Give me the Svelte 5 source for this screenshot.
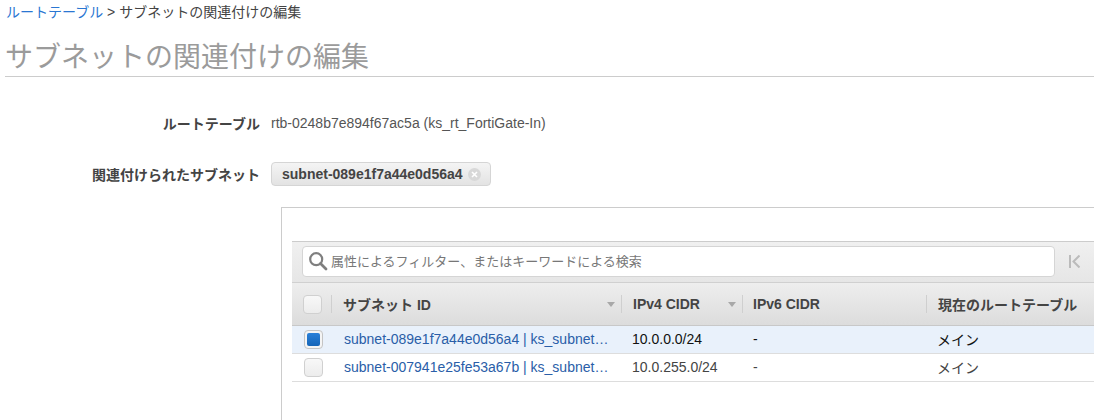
<script>
  const rows = [
    { id: 'subnet-089e1f7a44e0d56a4 | ks_subnet…', cidr: '10.0.0.0/24', selected: true },
    { id: 'subnet-007941e25fe53a67b | ks_subnet…', cidr: '10.0.255.0/24', selected: false }
  ];
</script>

<div class="page">
  <nav class="crumb"><span class="link">ルートテーブル</span> &gt; サブネットの関連付けの編集</nav>
  <h1>サブネットの関連付けの編集</h1>

  <div class="field first">
    <div class="label">ルートテーブル</div>
    <div class="value">rtb-0248b7e894f67ac5a (ks_rt_FortiGate-In)</div>
  </div>
  <div class="field second">
    <div class="label">関連付けられたサブネット</div>
    <div class="chip">
      <span>subnet-089e1f7a44e0d56a4</span>
      <svg width="13" height="13" viewBox="0 0 13 13"><circle cx="6.5" cy="6.5" r="6.5" fill="#d8d8d8"/><path d="M4 4l5 5M9 4l-5 5" stroke="#fff" stroke-width="1.6"/></svg>
    </div>
  </div>

  <section class="panel">
    <div class="toolbar">
      <div class="search">
        <svg width="20" height="20" viewBox="0 0 20 20" fill="none"><circle cx="8.2" cy="8.2" r="6" stroke="#7f7f7f" stroke-width="2.2"/><path d="M12.5 12.5l5.5 5.5" stroke="#7f7f7f" stroke-width="2.8" stroke-linecap="round"/></svg>
        <span>属性によるフィルター、またはキーワードによる検索</span>
      </div>
      <svg class="first-page" width="11" height="13" viewBox="0 0 11 13" fill="none"><path d="M1 0v13" stroke="#bbb" stroke-width="2"/><path d="M10.5 .5L4.5 6.5l6 6" stroke="#bbb" stroke-width="2"/></svg>
    </div>

    <div class="grid head">
      <div class="cell check"><span class="box"></span></div>
      <div class="cell th sep">サブネット ID<i class="caret"></i></div>
      <div class="cell th sep">IPv4 CIDR<i class="caret"></i></div>
      <div class="cell th sep tight">IPv6 CIDR</div>
      <div class="cell th sep">現在のルートテーブル</div>
    </div>
    {#each rows as row}
      <div class="grid row" class:selected={row.selected}>
        <div class="cell check"><span class="box" class:on={row.selected}></span></div>
        <div class="cell td id">{row.id}</div>
        <div class="cell td">{row.cidr}</div>
        <div class="cell td">-</div>
        <div class="cell td">メイン</div>
      </div>
    {/each}
  </section>
</div>

<style>
  :global(body) { margin: 0; background: #fff; overflow: hidden; }
  .page {
    width: 1094px;
    height: 420px;
    overflow: hidden;
    box-sizing: border-box;
    padding: 0 0 0 5px;
    font-family: "Liberation Sans", "Noto Sans CJK JP", sans-serif;
    font-size: 14px;
    color: #444;
  }
  .crumb { height: 24px; line-height: 24px; padding-left: 1px; white-space: nowrap; }
  .link { color: #2a76d2; }
  h1 {
    margin: 15px 0 0;
    height: 37px;
    line-height: 37px;
    font-size: 28px;
    font-weight: 400;
    color: #9b9b9b;
    border-bottom: 1px solid #ccc;
    white-space: nowrap;
  }
  .field { display: flex; align-items: center; }
  .first { margin-top: 32px; height: 27px; }
  .second { margin-top: 26px; height: 24px; }
  .label { width: 255px; text-align: right; font-weight: 700; color: #444; white-space: nowrap; }
  .value { margin-left: 11px; color: #555; white-space: nowrap; }
  .chip {
    margin-left: 11px;
    box-sizing: border-box;
    width: 220px;
    height: 24px;
    display: flex;
    align-items: center;
    gap: 5px;
    padding-left: 10px;
    border: 1px solid #d5d5d5;
    border-radius: 4px;
    background: linear-gradient(#f4f4f4, #e3e3e3);
    font-weight: 700;
    color: #444;
    white-space: nowrap;
  }
  .panel {
    margin: 21px 0 0 276px;
    width: 900px;
    height: 300px;
    box-sizing: border-box;
    border: 1px solid #ccc;
    padding: 33px 10px 0;
  }
  .toolbar {
    width: 810px;
    height: 41px;
    box-sizing: border-box;
    display: flex;
    align-items: center;
    padding: 0 0 2px 10px;
    border-top: 1px solid #ccc;
    background: linear-gradient(#f0f0f0, #e6e6e6);
  }
  .search {
    width: 753px;
    height: 31px;
    box-sizing: border-box;
    display: flex;
    align-items: center;
    gap: 3px;
    padding-left: 5px;
    background: #fff;
    border: 1px solid #d5d5d5;
    border-radius: 4px;
    font-size: 13px;
    color: #777;
    white-space: nowrap;
  }
  .search span { padding-bottom: 1px; }
  .first-page { margin-left: 14px; }
  .grid {
    display: grid;
    grid-template-columns: 39px 290px 121px 184px 176px;
    width: 810px;
  }
  .head {
    height: 44px;
    border-top: 1px solid #d0d0d0;
    border-bottom: 1px solid #c8c8c8;
    box-sizing: border-box;
    background: linear-gradient(#eeeeee, #dcdcdc);
  }
  .row {
    height: 28px;
    box-sizing: border-box;
    border-bottom: 1px solid #ddd;
  }
  .row.selected { background: #e9f1fb; }
  .cell { display: flex; align-items: center; min-width: 0; position: relative; }
  .check { padding-left: 11px; }
  .box {
    width: 19px;
    height: 19px;
    box-sizing: border-box;
    border: 1px solid #d0d0d0;
    border-radius: 4px;
    background: linear-gradient(#f8f8f8, #ececec);
  }
  .row .box { margin-left: 1px; }
  .box.on {
    background: #f4f4f4;
    border-color: #c4c4c4;
    position: relative;
  }
  .box.on::after {
    content: "";
    position: absolute;
    inset: 2px;
    border-radius: 2px;
    background: linear-gradient(#2a80d8, #1565b8);
  }
  .th {
    font-weight: 700;
    color: #444;
    padding-left: 12px;
    padding-bottom: 1px;
    white-space: nowrap;
  }
  .th.tight { padding-left: 11px; }
  .sep::before {
    content: "";
    position: absolute;
    left: 0;
    top: 12px;
    bottom: 12px;
    width: 1px;
    background: #cfcfcf;
  }
  .caret {
    position: absolute;
    right: 6px;
    top: 19px;
    border: 4px solid transparent;
    border-top: 5px solid #a8a8a8;
    border-bottom: 0;
  }
  .td { padding-left: 11px; padding-bottom: 2px; color: #444; white-space: nowrap; }
  .row.selected .td { color: #111; }
  .row.selected .td.id, .td.id { color: #2a5ea8; padding-left: 13px; }
</style>
